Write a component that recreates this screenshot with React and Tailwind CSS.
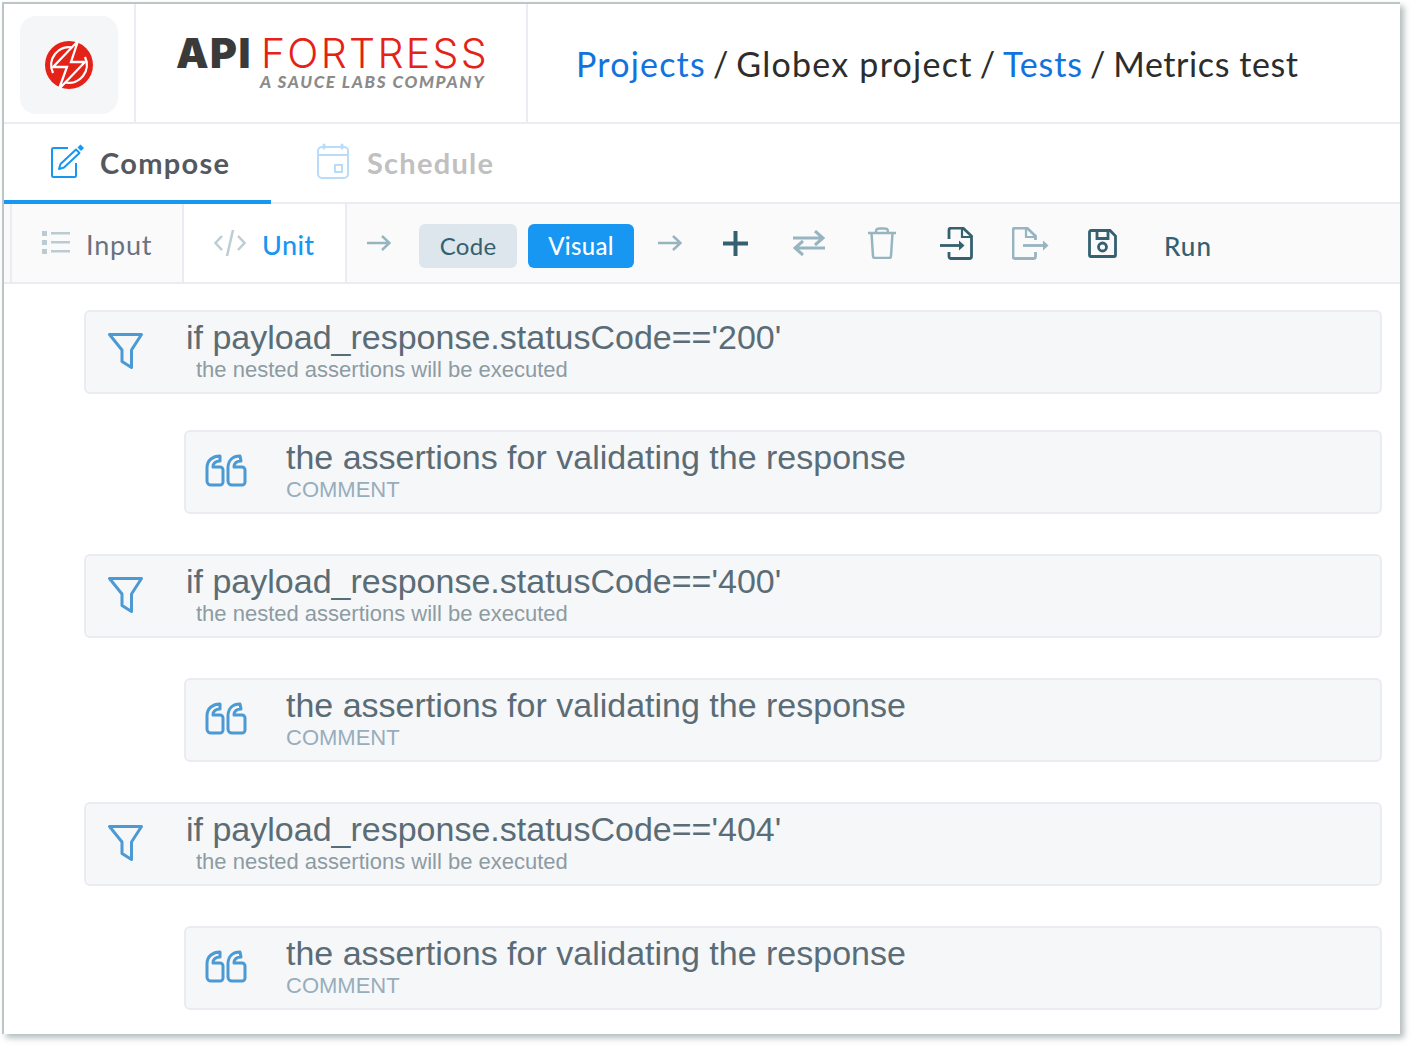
import React from "react";

const ROWS = [
  { type: "if", code: "200", mt: "mt-[26px]" },
  { type: "comment", mt: "mt-[36px]" },
  { type: "if", code: "400", mt: "mt-[40px]" },
  { type: "comment", mt: "mt-[40px]" },
  { type: "if", code: "404", mt: "mt-[40px]" },
  { type: "comment", mt: "mt-[40px]" },
];

const BoltLogo = () => (
  <svg width="50" height="50" viewBox="0 0 50 50">
    <circle cx="25" cy="25" r="24" fill="#e42217" />
    <path d="M9 33 A18 18 0 0 1 29 7.500" fill="none" stroke="#fff" strokeWidth="2.300" />
    <path d="M41 17 A18 18 0 0 1 21 42.500" fill="none" stroke="#fff" strokeWidth="2.300" />
    <path d="M34 1 L9 27 H23 L15 49 L41 22 H27 Z" fill="#e42217" stroke="#fff" strokeWidth="2.300" strokeLinejoin="miter" />
  </svg>
);

const ComposeIcon = () => (
  <svg width="36" height="36" viewBox="0 0 36 36" fill="none" stroke="#1797f2" strokeWidth="2" className="mt-[-3px]">
    <path d="M19 5 H4.500 a1.500 1.500 0 0 0 -1.500 1.500 V32.500 a1.500 1.500 0 0 0 1.500 1.500 H25.500 a1.500 1.500 0 0 0 1.500 -1.500 V20" />
    <path d="M10 26 L11.500 21 L27 6.500 L30.500 10 L15 24.500 Z" strokeLinejoin="round" />
    <path d="M28.500 4.500 L31.500 1.500 L35 5 L32 8 Z" fill="#1797f2" stroke="none" />
  </svg>
);

const CalendarIcon = () => (
  <svg width="32" height="36" viewBox="0 0 32 36" fill="none" stroke="#b9dcfb" strokeWidth="2">
    <rect x="1" y="4" width="30" height="31" rx="4" />
    <path d="M1 12 H31" />
    <path d="M7 5 V2 M25 5 V2" strokeWidth="3" strokeLinecap="round" />
    <rect x="18" y="22" width="7" height="7" />
  </svg>
);

const ListIcon = () => (
  <svg width="28" height="24" viewBox="0 0 28 24" fill="#bccbd1">
    <rect x="0" y="0" width="5" height="5" />
    <rect x="0" y="9" width="5" height="5" />
    <rect x="0" y="18" width="5" height="5" />
    <rect x="9" y="1" width="19" height="2.500" />
    <rect x="9" y="10" width="19" height="2.500" />
    <rect x="9" y="19" width="19" height="2.500" />
  </svg>
);

const CodeIcon = () => (
  <svg width="32" height="28" viewBox="0 0 32 28" fill="none" stroke="#bccdd3" strokeWidth="2.500">
    <path d="M8 7 L1.500 14 L8 21 M24 7 L30.500 14 L24 21 M19 1 L13 27" />
  </svg>
);

const ArrowIcon = () => (
  <svg width="24" height="16" viewBox="0 0 24 16" fill="none" stroke="#97b4c1" strokeWidth="2.500">
    <path d="M0 8 H22 M15 1 L22.500 8 L15 15" />
  </svg>
);

const PlusIcon = () => (
  <svg width="25" height="25" viewBox="0 0 25 25" fill="none" stroke="#34606f" strokeWidth="4">
    <path d="M12.500 0 V25 M0 12.500 H25" />
  </svg>
);

const SwapIcon = () => (
  <svg width="32" height="26" viewBox="0 0 32 26" fill="none" stroke="#97b4c1" strokeWidth="3">
    <path d="M0 8 H30 M22 1 L30 8 L22 15 M32 18 H2 M10 11 L2 18 L10 25" />
  </svg>
);

const TrashIcon = () => (
  <svg width="28" height="32" viewBox="0 0 28 32" fill="none" stroke="#97b4c1" strokeWidth="2.500">
    <path d="M0 6 H28 M8 5 C8 1 10 1.500 14 1.500 C18 1.500 20 1 20 5" />
    <path d="M3.500 6 L5 29 a2 2 0 0 0 2 2 H21 a2 2 0 0 0 2 -2 L24.500 6" />
  </svg>
);

const FileInIcon = () => (
  <svg width="33" height="33" viewBox="0 0 33 33" fill="none" stroke="#34606f" strokeWidth="2.800">
    <path d="M9 12 V3 a2 2 0 0 1 2 -2 H23 L31.500 9 V29.500 a2 2 0 0 1 -2 2 H11 a2 2 0 0 1 -2 -2 V25" />
    <path d="M22 2 V10 H31" strokeWidth="2.200" />
    <path d="M0 18.500 H20" />
    <path d="M19 13.500 L24.500 18.500 L19 23.500 Z" fill="#34606f" stroke="none" />
  </svg>
);

const FileOutIcon = () => (
  <svg width="37" height="33" viewBox="0 0 37 33" fill="none" stroke="#97b4c1" strokeWidth="2.800">
    <path d="M23.500 13 V9 L15 1 H3 a2 2 0 0 0 -2 2 V29.500 a2 2 0 0 0 2 2 H21.500 a2 2 0 0 0 2 -2 V25" />
    <path d="M14 2 V10 H23" strokeWidth="2.200" />
    <path d="M11 18.500 H31" />
    <path d="M31 13.500 L36.500 18.500 L31 23.500 Z" fill="#97b4c1" stroke="none" />
  </svg>
);

const SaveIcon = () => (
  <svg width="29" height="29" viewBox="0 0 29 29" fill="none" stroke="#34606f" strokeWidth="2.800">
    <path d="M3 1.500 H22 L27.500 7 V26 a1.500 1.500 0 0 1 -1.500 1.500 H3 a1.500 1.500 0 0 1 -1.500 -1.500 V3 a1.500 1.500 0 0 1 1.500 -1.500 Z" />
    <path d="M9 2 V9.500 H20 V2" />
    <circle cx="14.500" cy="18" r="4" />
  </svg>
);

const FilterIcon = () => (
  <svg width="37" height="38" viewBox="0 0 37 38" fill="none" stroke="#4b9ad4" strokeWidth="3" strokeLinejoin="round">
    <path d="M2.500 2.500 H34.500 L24.500 18 V35.500 L15 29.500 V18 Z" />
  </svg>
);

const QuoteIcon = () => (
  <svg width="42" height="33" viewBox="0 0 42 33" fill="none" stroke="#4b9ad4" strokeWidth="3" strokeLinejoin="round">
    <path d="M15 2 C8 2 2 6 2 14 V27 a4 4 0 0 0 4 4 H15 a3 3 0 0 0 3 -3 V16 a3 3 0 0 0 -3 -3 H8 C8 9 11 7 15 7 Z" />
    <path d="M35 2 C28 2 23 6 23 14 V27 a4 4 0 0 0 4 4 H37 a3 3 0 0 0 3 -3 V16 a3 3 0 0 0 -3 -3 H29 C29 9 32 7 36 7 Z" />
  </svg>
);

const IfRow = ({ code, mt }) => (
  <div className={`${mt} ml-[80px] mr-[18px] flex h-[84px] items-start rounded-md border-2 border-[#ebecf1] bg-[#f6f7f9] pl-[21px]`}>
    <div className="mt-[20px] w-[79px] shrink-0">
      <FilterIcon />
    </div>
    <div className="font-['Liberation_Sans',sans-serif]">
      <div className="mt-[4px] text-[34px] leading-[42px] text-[#5a6c75]">
        if payload_response.statusCode=='{code}'
      </div>
      <div className="ml-[10px] mt-[1px] text-[22px] leading-[22px] text-[#8d9ba3]">
        the nested assertions will be executed
      </div>
    </div>
  </div>
);

const CommentRow = ({ mt }) => (
  <div className={`${mt} ml-[180px] mr-[18px] flex h-[84px] items-start rounded-md border-2 border-[#ebecf1] bg-[#f6f7f9] pl-[19px]`}>
    <div className="mt-[22px] w-[81px] shrink-0">
      <QuoteIcon />
    </div>
    <div className="font-['Liberation_Sans',sans-serif]">
      <div className="mt-[4px] text-[34px] leading-[42px] text-[#5a6c75]">
        the assertions for validating the response
      </div>
      <div className="mt-[1px] text-[22px] leading-[22px] text-[#97adbd]">COMMENT</div>
    </div>
  </div>
);

const App = () => {
  return (
    <div className="h-[1046px] w-[1412px] bg-white p-[2px] font-['Lato',sans-serif]">
      <div className="h-[1032px] w-[1398px] overflow-hidden border-t-2 border-l-2 border-[#bcc6c6] bg-white shadow-[4px_4px_6px_rgba(120,135,135,0.55)]">
        {/* header */}
        <div className="flex h-[120px] border-b-2 border-[#ebecf1]">
          <div className="flex w-[132px] shrink-0 items-start border-r-2 border-[#ebecf1] pt-[12px] pl-[16px]">
            <div className="flex h-[98px] w-[98px] items-center justify-center rounded-2xl bg-[#f5f6f8]">
              <BoltLogo />
            </div>
          </div>
          <div className="w-[392px] shrink-0 border-r-2 border-[#ebecf1] pt-[29px] pl-[40px] font-['Inter',sans-serif]">
            <div className="flex h-[40px] items-center whitespace-nowrap text-[41px] leading-[40px]">
              <span className="font-black tracking-[1.5px] text-[#3a3a3a]">API</span>
              <span className="ml-[9px] font-light tracking-[2.3px] text-[#e42217]">FORTRESS</span>
            </div>
            <div className="ml-[84px] mt-[-1px] whitespace-nowrap font-['Lato',sans-serif] text-[17px] font-black italic leading-[20px] tracking-[1.65px] text-[#8b8b8b]">
              A SAUCE LABS COMPANY
            </div>
          </div>
          <div className="flex items-center gap-[7px] whitespace-nowrap pl-[48px] text-[34px] tracking-[0.9px] text-[#2d2d2d]">
            <span className="tracking-[1.2px] text-[#1273de]">Projects</span>
            <span>/</span>
            <span className="tracking-[1.25px]">Globex project</span>
            <span>/</span>
            <span className="text-[#1273de]">Tests</span>
            <span>/</span>
            <span className="tracking-[0.6px]">Metrics test</span>
          </div>
        </div>

        {/* tabs */}
        <div className="flex h-[80px] border-b-2 border-[#ebecf1]">
          <div className="mb-[-2px] flex h-[80px] w-[267px] items-start border-b-4 border-[#1797f2] pl-[45px] pt-[22px]">
            <ComposeIcon />
            <span className="ml-[15px] mt-[-1px] text-[29px] font-bold leading-[36px] tracking-[1.3px] text-[#55585f]">Compose</span>
          </div>
          <div className="flex items-start pl-[46px] pt-[19px]">
            <CalendarIcon />
            <span className="ml-[18px] mt-[2px] text-[29px] font-bold leading-[36px] tracking-[1.25px] text-[#c0c0c0]">Schedule</span>
          </div>
        </div>

        {/* toolbar */}
        <div className="flex h-[80px] items-center border-b-2 border-[#ebecf1] bg-[#fafafa] pl-[6px] text-[27px]">
          <div className="flex h-full w-[174px] items-center border-x-2 border-[#ebecf1] pl-[30px]">
            <ListIcon />
            <span className="ml-[16px] mt-[4px] tracking-[0.8px] text-[#6b7280]">Input</span>
          </div>
          <div className="flex h-full w-[163px] items-center border-r-2 border-[#ebecf1] bg-white pl-[30px]">
            <CodeIcon />
            <span className="ml-[16px] mt-[4px] font-medium tracking-[0.4px] text-[#1797f2]">Unit</span>
          </div>
          <div className="ml-[20px]"><ArrowIcon /></div>
          <button className="ml-[28px] mt-[6px] h-[44px] w-[98px] rounded-md bg-[#dce6ec] text-[24px] tracking-[0.3px] text-[#34606f]">Code</button>
          <button className="ml-[11px] mt-[6px] h-[44px] w-[106px] rounded-md bg-[#1797f2] text-[24px] font-medium tracking-[0.3px] text-white">Visual</button>
          <div className="ml-[24px]"><ArrowIcon /></div>
          <div className="ml-[41px]"><PlusIcon /></div>
          <div className="ml-[45px]"><SwapIcon /></div>
          <div className="ml-[43px]"><TrashIcon /></div>
          <div className="ml-[44px]"><FileInIcon /></div>
          <div className="ml-[39px]"><FileOutIcon /></div>
          <div className="ml-[39px]"><SaveIcon /></div>
          <span className="ml-[47px] mt-[6px] text-[26px] font-medium tracking-[1px] text-[#34606f]">Run</span>
        </div>

        {/* rows */}
        {ROWS.map((row, i) =>
          row.type === "if" ? (
            <IfRow key={i} code={row.code} mt={row.mt} />
          ) : (
            <CommentRow key={i} mt={row.mt} />
          )
        )}
      </div>
    </div>
  );
};

export default App;
